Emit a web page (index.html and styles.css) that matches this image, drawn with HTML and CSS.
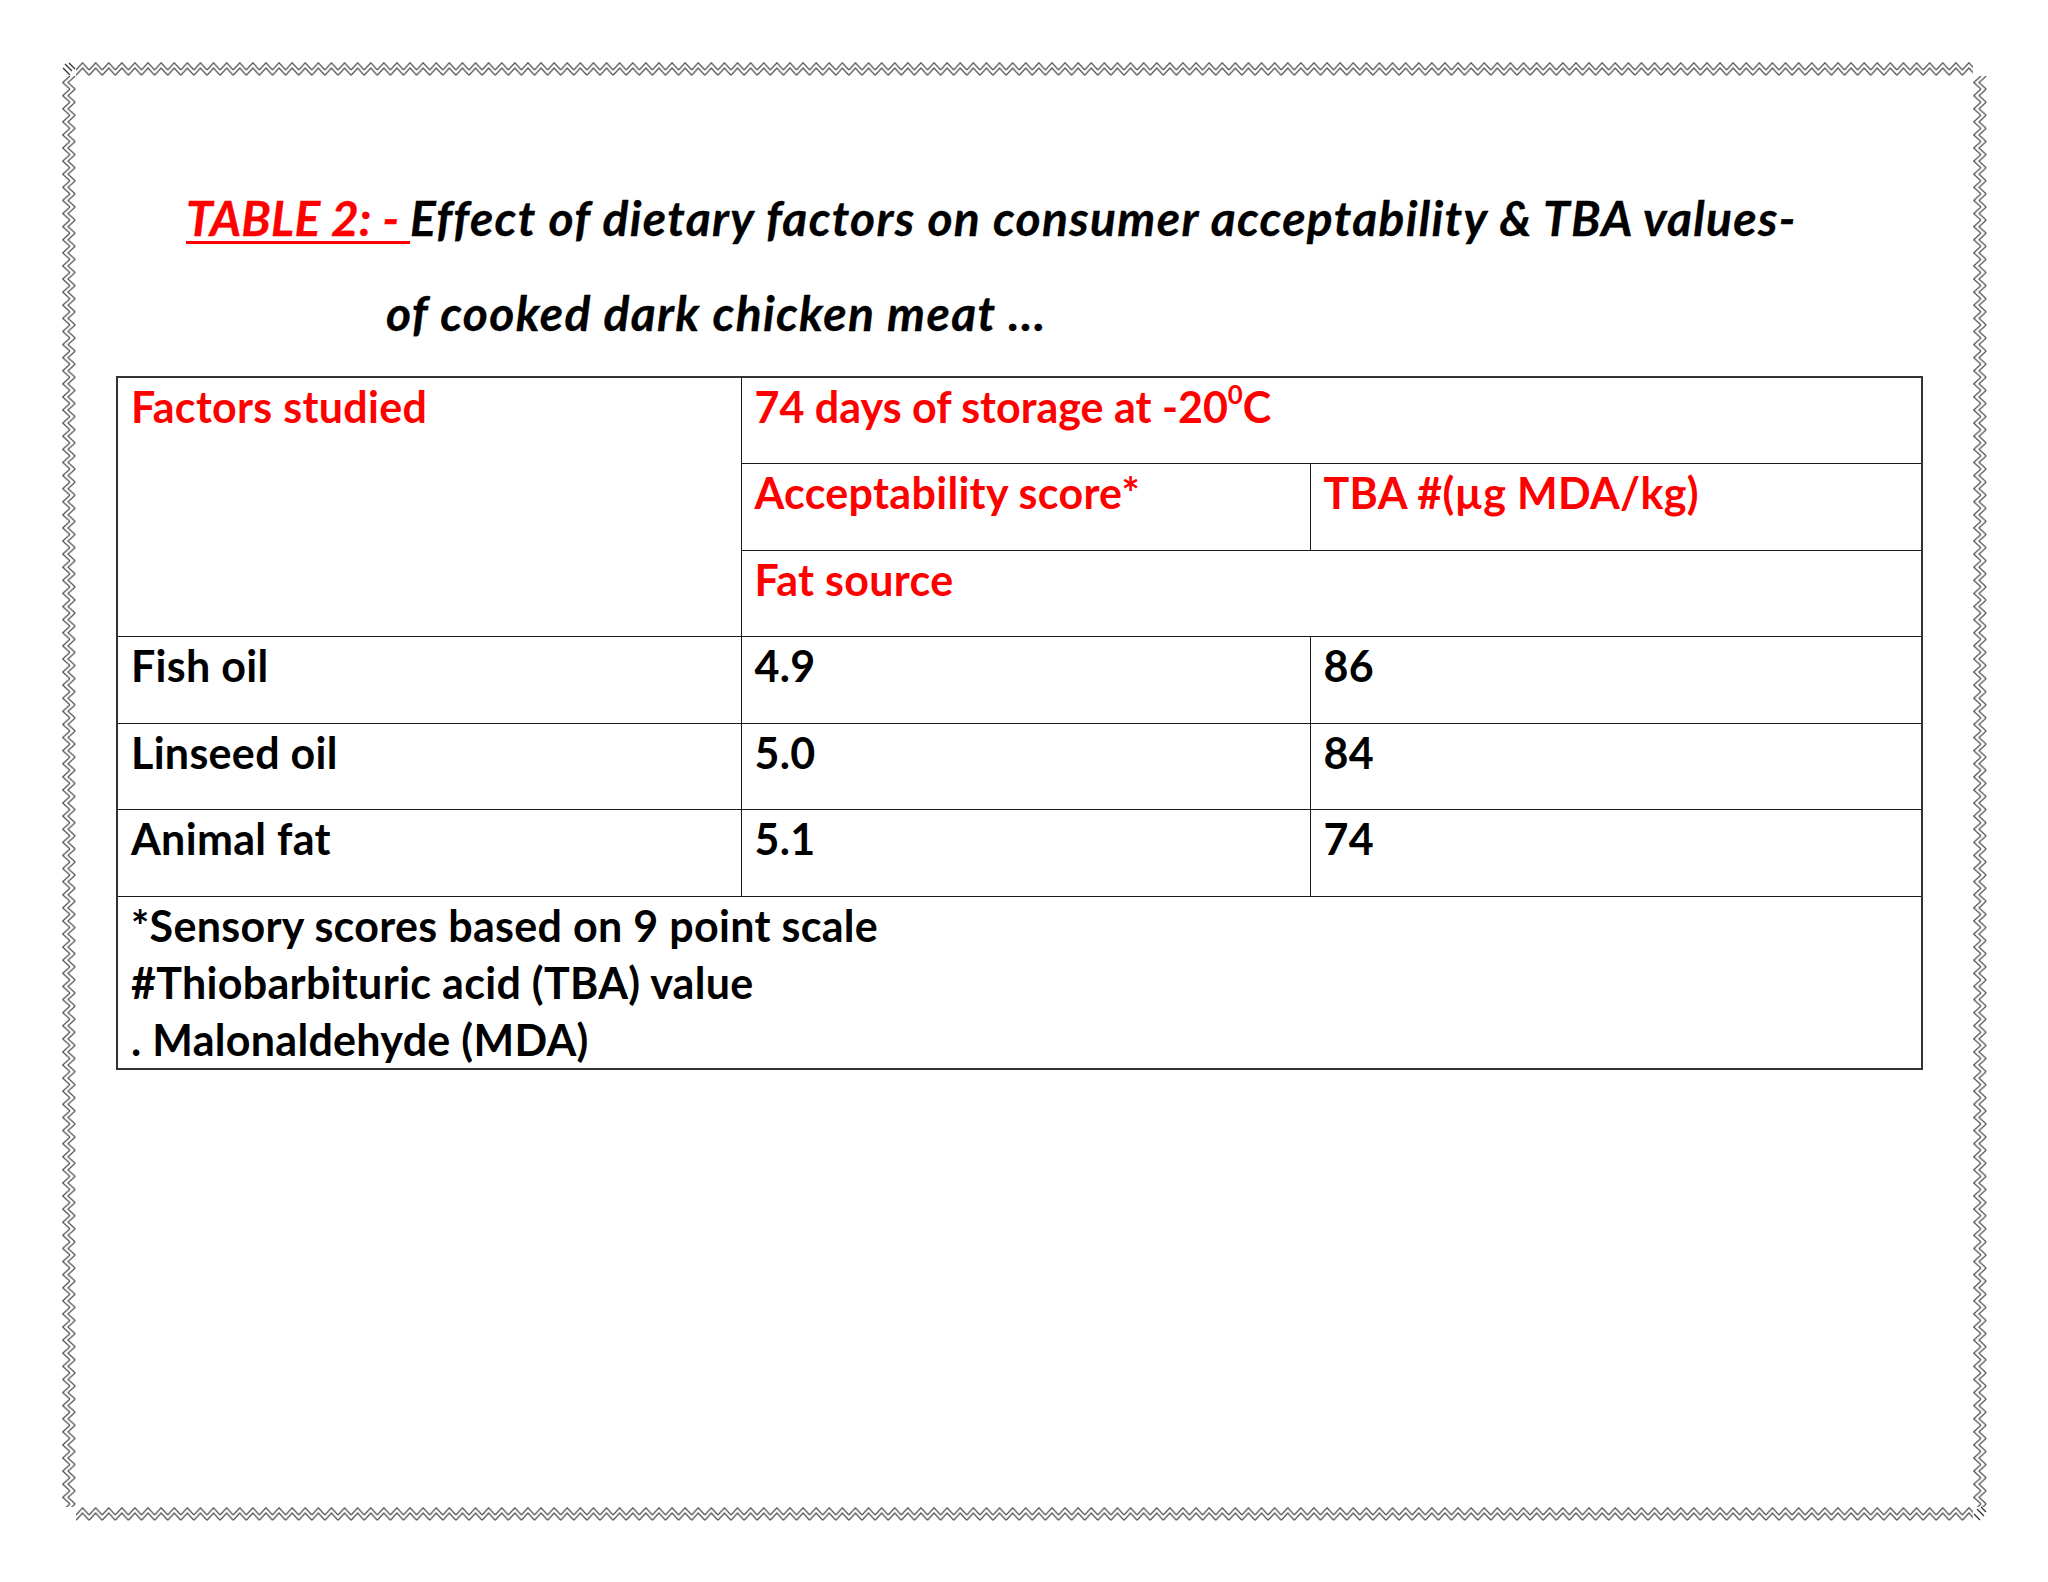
FILE: index.html
```html
<!DOCTYPE html>
<html lang="en">
<head>
<meta charset="utf-8">
<title>Table 2</title>
<link rel="stylesheet" href="styles.css">
</head>
<body>
<div class="page">
  <svg class="frame" width="1925" height="1459" viewBox="0 0 1925 1459" aria-hidden="true">
    <defs>
      <pattern id="zzh" width="13.1" height="14" patternUnits="userSpaceOnUse">
        <polyline points="0,8 6.55,0.8 13.1,8" fill="none" stroke="#5a5a5a" stroke-width="1.3"/>
        <polyline points="0,13.2 6.55,6 13.1,13.2" fill="none" stroke="#5a5a5a" stroke-width="1.3"/>
      </pattern>
      <pattern id="zzv" width="14" height="13.1" patternUnits="userSpaceOnUse">
        <polyline points="8,0 0.8,6.55 8,13.1" fill="none" stroke="#5a5a5a" stroke-width="1.3"/>
        <polyline points="13.2,0 6,6.55 13.2,13.1" fill="none" stroke="#5a5a5a" stroke-width="1.3"/>
      </pattern>
    </defs>
    <g transform="translate(14,0)"><rect width="1897" height="14" fill="url(#zzh)"/></g>
    <g transform="translate(14,1445)"><rect width="1897" height="14" fill="url(#zzh)"/></g>
    <g transform="translate(0,14)"><rect width="14" height="1431" fill="url(#zzv)"/></g>
    <g transform="translate(1911,14)"><rect width="14" height="1431" fill="url(#zzv)"/></g>
    <path d="M3,2 L10,9 M7,1 L13,7 M1,6 L8,13" stroke="#333" stroke-width="1.3" fill="none"/>
    <path d="M1915,1447 L1922,1454 M1912,1452 L1918,1458 M1919,1445 L1924,1450" stroke="#333" stroke-width="1.3" fill="none"/>
  </svg>

  <div class="content">
    <h1 class="title">
      <span class="title-line first"><span class="label">TABLE 2: - </span>Effect of dietary factors on consumer acceptability &amp; TBA values-</span>
      <span class="title-line second">of cooked dark chicken meat …</span>
    </h1>

    <table class="data">
      <colgroup>
        <col class="c1">
        <col class="c2">
        <col class="c3">
      </colgroup>
      <tbody>
        <tr>
          <td class="red" rowspan="3">Factors studied</td>
          <td class="red tight" colspan="2">74 days of storage at -20<sup>0</sup>C</td>
        </tr>
        <tr>
          <td class="red">Acceptability score*</td>
          <td class="red">TBA #(µg MDA/kg)</td>
        </tr>
        <tr>
          <td class="red" colspan="2">Fat source</td>
        </tr>
        <tr>
          <td>Fish oil</td>
          <td>4.9</td>
          <td>86</td>
        </tr>
        <tr>
          <td>Linseed oil</td>
          <td>5.0</td>
          <td>84</td>
        </tr>
        <tr>
          <td>Animal fat</td>
          <td>5.1</td>
          <td>74</td>
        </tr>
        <tr class="notes">
          <td colspan="3">*Sensory scores based on 9 point scale<br>#Thiobarbituric acid (TBA) value<br>. Malonaldehyde (MDA)</td>
        </tr>
      </tbody>
    </table>
  </div>
</div>
</body>
</html>
```

FILE: styles.css
```css
html, body {
  margin: 0;
  padding: 0;
  background: #ffffff;
}

.page {
  position: relative;
  width: 2048px;
  height: 1582px;
  overflow: hidden;
  font-family: "Lato", "Carlito", "Liberation Sans", sans-serif;
  font-weight: 700;
  font-size: 43px;
  color: #000000;
}

.frame {
  position: absolute;
  left: 62px;
  top: 62px;
}

.content {
  padding-top: 170px;
  padding-left: 116px;
}

.title {
  margin: 0;
  font-size: 48px;
  font-style: italic;
  font-weight: 700;
  line-height: 95px;
  letter-spacing: 1.32px;
  -webkit-text-stroke: 0.3px #000000;
}

.title-line {
  display: block;
  white-space: nowrap;
}

.title-line.first {
  margin-left: 70px;
}

.title-line.second {
  margin-left: 270px;
}

.label {
  color: #ff0000;
  -webkit-text-stroke: 0.3px #ff0000;
  letter-spacing: 0.2px;
  text-decoration: underline;
  text-decoration-color: #ff0000;
  text-decoration-thickness: 3px;
  text-underline-offset: 5px;
  text-decoration-skip-ink: none;
}

.data {
  margin-top: 16px;
  width: 1805px;
  border-collapse: collapse;
  table-layout: fixed;
  border: 2px solid #333333;
}

.c1 { width: 624px; }
.c2 { width: 569px; }
.c3 { width: 612px; }

.data td {
  border: 1px solid #1a1a1a;
  vertical-align: top;
  padding: 0 10px 0 13px;
  height: 86.5px;
  line-height: 57px;
  letter-spacing: 0.3px;
  box-sizing: border-box;
  white-space: nowrap;
}

.data td.red {
  color: #ff0000;
}

.data td.tight {
  letter-spacing: 0;
}

.data sup {
  font-size: 0.6em;
  line-height: 0;
  vertical-align: 0.75em;
  letter-spacing: 0;
}

.data .notes td {
  height: 171px;
}
```
